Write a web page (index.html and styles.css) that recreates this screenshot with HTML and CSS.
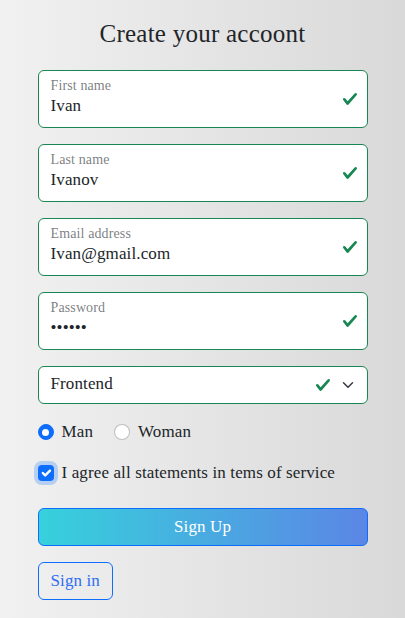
FILE: index.html
```html
<!DOCTYPE html>
<html lang="en">
<head>
<meta charset="utf-8">
<title>Create your account</title>
<link rel="stylesheet" href="styles.css">
</head>
<body>
<main class="page">
  <h3 class="title">Create your accoont</h3>
  <form class="form">
    <div class="field">
      <input class="control" id="fn" type="text" value="Ivan">
      <label class="float-label" for="fn">First name</label>
      <svg class="valid-icon" viewBox="0 0 8 8" width="16" height="16"><path fill="#198754" d="M2.3 6.73.6 4.53c-.4-1.04.46-1.4 1.1-.8l1.1 1.4 3.4-3.8c.6-.63 1.6-.27 1.2.7l-4 4.6c-.43.5-.8.4-1.1.1z"/></svg>
    </div>
    <div class="field">
      <input class="control" id="ln" type="text" value="Ivanov">
      <label class="float-label" for="ln">Last name</label>
      <svg class="valid-icon" viewBox="0 0 8 8" width="16" height="16"><path fill="#198754" d="M2.3 6.73.6 4.53c-.4-1.04.46-1.4 1.1-.8l1.1 1.4 3.4-3.8c.6-.63 1.6-.27 1.2.7l-4 4.6c-.43.5-.8.4-1.1.1z"/></svg>
    </div>
    <div class="field">
      <input class="control" id="em" type="email" value="Ivan@gmail.com">
      <label class="float-label" for="em">Email address</label>
      <svg class="valid-icon" viewBox="0 0 8 8" width="16" height="16"><path fill="#198754" d="M2.3 6.73.6 4.53c-.4-1.04.46-1.4 1.1-.8l1.1 1.4 3.4-3.8c.6-.63 1.6-.27 1.2.7l-4 4.6c-.43.5-.8.4-1.1.1z"/></svg>
    </div>
    <div class="field">
      <input class="control" id="pw" type="password" value="123456">
      <label class="float-label" for="pw">Password</label>
      <svg class="valid-icon" viewBox="0 0 8 8" width="16" height="16"><path fill="#198754" d="M2.3 6.73.6 4.53c-.4-1.04.46-1.4 1.1-.8l1.1 1.4 3.4-3.8c.6-.63 1.6-.27 1.2.7l-4 4.6c-.43.5-.8.4-1.1.1z"/></svg>
    </div>
    <div class="field select-field">
      <select class="control select" aria-label="Direction">
        <option selected>Frontend</option>
        <option>Backend</option>
      </select>
      <svg class="valid-icon select-valid" viewBox="0 0 8 8" width="16" height="16"><path fill="#198754" d="M2.3 6.73.6 4.53c-.4-1.04.46-1.4 1.1-.8l1.1 1.4 3.4-3.8c.6-.63 1.6-.27 1.2.7l-4 4.6c-.43.5-.8.4-1.1.1z"/></svg>
      <svg class="chevron" viewBox="0 0 16 16" width="16" height="12"><path fill="none" stroke="#343a40" stroke-linecap="round" stroke-linejoin="round" stroke-width="2" d="m2 5 6 6 6-6"/></svg>
    </div>
    <div class="choice-row">
      <label class="check"><span class="radio on"><span class="dot"></span></span>Man</label>
      <label class="check"><span class="radio"></span>Woman</label>
    </div>
    <div class="choice-row agree-row">
      <label class="check"><span class="box on"><svg viewBox="0 0 20 20" width="16" height="16"><path fill="none" stroke="#fff" stroke-linecap="round" stroke-linejoin="round" stroke-width="3" d="m6 10 3 3 6-6"/></svg></span>I agree all statements in tems of service</label>
    </div>
    <button class="btn btn-signup" type="button">Sign Up</button>
    <div class="signin-row">
      <button class="btn btn-signin" type="button">Sign in</button>
    </div>
  </form>
</main>
</body>
</html>
```
FILE: styles.css
```css
html, body {
  margin: 0;
  height: 100%;
}
body {
  background: linear-gradient(to right, #f1f1f1, #d9d9d9);
  font-family: "Liberation Serif", "Times New Roman", serif;
  font-size: 17px;
  letter-spacing: 0.12px;
  color: #212529;
}
.page {
  width: 330px;
  margin: 0 auto;
  padding-top: 20px;
}
.title {
  margin: 0 0 22px;
  font-size: 25px;
  line-height: 28px;
  font-weight: 400;
  letter-spacing: 0.01em;
  text-align: center;
  color: #212529;
}
.form {
  display: flex;
  flex-direction: column;
}
.field {
  position: relative;
  margin-bottom: 16px;
}
.control {
  display: block;
  box-sizing: border-box;
  width: 100%;
  height: 58px;
  margin: 0;
  padding: 23px 36px 10px 12px;
  border: 1px solid #198754;
  border-radius: 6px;
  background: #fff;
  font: inherit;
  letter-spacing: inherit;
  line-height: 24px;
  color: #212529;
  outline: none;
}
.float-label {
  position: absolute;
  top: 8px;
  left: 13px;
  font-size: 14px;
  line-height: 1.2;
  color: rgba(33, 37, 41, 0.6);
  pointer-events: none;
}
.valid-icon {
  position: absolute;
  right: 10px;
  top: 21px;
}
.select {
  height: 38px;
  padding: 5px 64px 7px 12px;
  -webkit-appearance: none;
  appearance: none;
}
.select-field .select-valid {
  right: 37px;
  top: 11px;
}
.chevron {
  position: absolute;
  right: 12px;
  top: 13px;
}
.choice-row {
  display: flex;
  gap: 21px;
  height: 24px;
  margin-bottom: 17px;
  line-height: 24px;
}
.agree-row {
  margin-bottom: 23px;
}
.check {
  display: flex;
  align-items: center;
  gap: 8px;
}
.radio {
  box-sizing: border-box;
  width: 16px;
  height: 16px;
  border: 1px solid rgba(0, 0, 0, 0.25);
  border-radius: 50%;
  background: #fff;
  display: flex;
  align-items: center;
  justify-content: center;
}
.radio.on {
  background: #0d6efd;
  border-color: #0d6efd;
}
.dot {
  width: 7px;
  height: 7px;
  border-radius: 50%;
  background: #fff;
}
.box {
  box-sizing: border-box;
  width: 16px;
  height: 16px;
  border-radius: 4px;
  display: flex;
  align-items: center;
  justify-content: center;
}
.box.on {
  background: #0d6efd;
  box-shadow: 0 0 0 4px rgba(13, 110, 253, 0.25);
}
.box svg {
  display: block;
}
.btn {
  box-sizing: border-box;
  height: 38px;
  padding: 6px 12px;
  border: 1px solid #0d6efd;
  border-radius: 6px;
  font: inherit;
  letter-spacing: inherit;
  line-height: 24px;
  cursor: pointer;
}
.btn-signup {
  width: 100%;
  margin-bottom: 16px;
  background: linear-gradient(to right, #36d1dc, #5b86e5);
  color: #fff;
}
.signin-row {
  display: flex;
}
.btn-signin {
  background: transparent;
  color: #2f6ef3;
}
```
